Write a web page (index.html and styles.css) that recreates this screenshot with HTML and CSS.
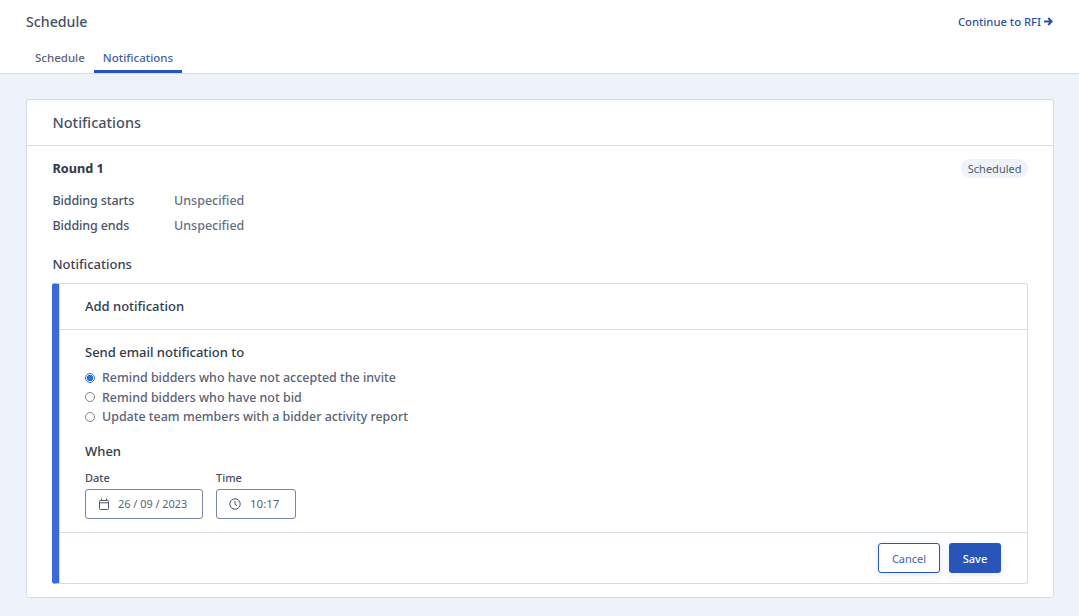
FILE: index.html
```html
<!DOCTYPE html>
<html lang="en">
<head>
<meta charset="utf-8">
<title>Schedule</title>
<link rel="stylesheet" href="styles.css">
</head>
<body>
<header class="topbar">
  <div class="topbar-row">
    <h1 class="page-title">Schedule</h1>
    <a class="continue" href="#">Continue to RFI
      <svg class="continue-arrow" viewBox="0 0 9 9" width="9" height="9" fill="none" stroke="#2f4f9f" stroke-width="2"><path d="M0 4.5H7.5M4.2 1L7.7 4.5L4.2 8"/></svg>
    </a>
  </div>
  <nav class="tabs">
    <a class="tab" href="#">Schedule</a>
    <a class="tab tab-active" href="#">Notifications</a>
  </nav>
</header>
<main class="content">
  <section class="card">
    <h2 class="card-title">Notifications</h2>
    <div class="card-body">
      <div class="round-head">
        <h3 class="round-title">Round 1</h3>
        <span class="badge">Scheduled</span>
      </div>
      <dl class="facts">
        <div class="fact"><dt>Bidding starts</dt><dd>Unspecified</dd></div>
        <div class="fact"><dt>Bidding ends</dt><dd>Unspecified</dd></div>
      </dl>
      <h3 class="section-title">Notifications</h3>
      <div class="panel">
        <h4 class="panel-title">Add notification</h4>
        <div class="panel-body">
          <div class="field-title">Send email notification to</div>
          <ul class="radios">
            <li class="radio-row"><span class="radio radio-on"></span>Remind bidders who have not accepted the invite</li>
            <li class="radio-row"><span class="radio"></span>Remind bidders who have not bid</li>
            <li class="radio-row"><span class="radio"></span>Update team members with a bidder activity report</li>
          </ul>
          <div class="field-title when">When</div>
          <div class="inputs">
            <div class="input-group">
              <span class="input-label">Date</span>
              <div class="input input-date">
                <svg viewBox="0 0 12 12" width="12" height="12" fill="none" stroke="#4a5568" stroke-width="1"><rect x="1.5" y="2.5" width="9" height="9" rx=".8"/><path d="M1.5 4.8H10.5M3.5 .5V2.5M8.5 .5V2.5"/></svg>
                <span>26 / 09 / 2023</span>
              </div>
            </div>
            <div class="input-group">
              <span class="input-label">Time</span>
              <div class="input input-time">
                <svg viewBox="0 0 12 12" width="12" height="12" fill="none" stroke="#4a5568" stroke-width="1"><circle cx="6" cy="6" r="5.2"/><path d="M6 2.8V6.2L8 7.6"/></svg>
                <span>10:17</span>
              </div>
            </div>
          </div>
        </div>
        <div class="panel-footer">
          <button class="btn btn-outline" type="button">Cancel</button>
          <button class="btn btn-primary" type="button">Save</button>
        </div>
      </div>
    </div>
  </section>
</main>
</body>
</html>
```
FILE: styles.css
```css
* { box-sizing: border-box; }
html, body { margin: 0; height: 100%; }
body {
  background: #eef2fb;
  font-family: "Noto Sans", "Open Sans", sans-serif;
  font-size: 13px;
  color: #3a4356;
  overflow: hidden;
}
h1, h2, h3, h4, dl, dd, ul { margin: 0; padding: 0; font-weight: 500; }
a { text-decoration: none; }
.topbar {
  height: 74px;
  background: #fff;
  border-bottom: 1px solid #d5dbe9;
  padding: 0 26px;
}
.topbar-row {
  display: flex;
  justify-content: space-between;
  align-items: center;
  height: 44px;
}
.page-title { font-size: 14.2px; font-weight: 500; line-height: 20px; color: #495162; }
.continue {
  display: flex;
  align-items: center;
  gap: 3px;
  margin-bottom: 1px;
  font-size: 11.25px;
  font-weight: 500;
  color: #2f4f9f;
}
.tabs { display: flex; height: 29px; }
.tab {
  padding: 0 9px;
  font-size: 11.5px;
  font-weight: 500;
  line-height: 28px;
  color: #5a6478;
  height: 29px;
}
.tab-active { color: #4460b0; border-bottom: 3px solid #2a55b8; }
.content { padding: 25px 25px 0 26px; }
.card {
  height: 499px;
  background: #fff;
  border: 1px solid #d5dbe9;
  border-radius: 3px;
}
.card-title {
  height: 46px;
  padding: 0 25.5px;
  border-bottom: 1px solid #d5dbe9;
  font-size: 14.5px;
  font-weight: 500;
  line-height: 45px;
  color: #495162;
}
.card-body { padding: 12px 25px 0 25px; }
.round-head {
  display: flex;
  justify-content: space-between;
  align-items: center;
  height: 20px;
  padding-left: .5px;
}
.round-title { font-size: 12.7px; font-weight: 700; color: #2f3645; }
.badge {
  font-size: 11px;
  line-height: 19px;
  height: 19px;
  padding: 0 6.5px;
  border-radius: 10px;
  background: #eef2fb;
  color: #525b6e;
}
.facts { margin-top: 10px; padding-left: .5px; }
.fact { display: flex; height: 25px; line-height: 25px; font-size: 12.5px; }
.fact dt { width: 121.5px; color: #4a5366; letter-spacing: -.12px; }
.fact dd { color: #667085; }
.section-title { margin-top: 16px; padding-left: .5px; font-size: 13px; line-height: 20px; color: #3a4356; }
.panel {
  margin-top: 9px;
  height: 301px;
  border: 1px solid #d5dbe9;
  border-left: 7px solid #3a6ad8;
  border-radius: 3px;
  box-shadow: inset 1px 0 0 #d5dbe9;
  display: flex;
  flex-direction: column;
}
.panel-title {
  height: 46px;
  padding: 0 26px;
  border-bottom: 1px solid #d5dbe9;
  font-size: 13px;
  line-height: 45px;
  color: #333b4c;
}
.panel-body { flex: 1; padding: 12px 26px 0; }
.field-title { font-size: 13px; font-weight: 500; line-height: 20px; color: #333b4c; }
.radios { list-style: none; margin-top: 6px; }
.radio-row {
  display: flex;
  align-items: center;
  height: 19.5px;
  font-size: 12.45px;
  color: #5a6375;
}
.radio {
  width: 10px;
  height: 10px;
  margin-right: 7px;
  border: 1px solid #858585;
  border-radius: 50%;
  background: #fff;
}
.radio-on {
  border-color: #2f6fe0;
  background: radial-gradient(circle, #2f6fe0 0 3px, #fff 3.5px);
}
.when { margin-top: 14px; }
.inputs { display: flex; gap: 13px; margin-top: 9px; }
.input-group { display: flex; flex-direction: column; }
.input-label { font-size: 11px; font-weight: 500; line-height: 15px; color: #444d60; }
.input {
  margin-top: 4px;
  height: 30px;
  display: flex;
  align-items: center;
  border: 1px solid #7a86a0;
  border-radius: 3px;
  font-size: 10.9px;
  color: #5a6375;
}
.input-date { width: 118px; padding-left: 12px; gap: 8px; }
.input-time { width: 80px; padding-left: 12px; gap: 9px; font-size: 11.5px; }
.panel-footer {
  height: 51px;
  padding: 10px 26px 0 0;
  border-top: 1px solid #d5dbe9;
  display: flex;
  justify-content: flex-end;
  gap: 9px;
}
.btn {
  height: 30px;
  border-radius: 3px;
  font-family: inherit;
  font-size: 11px;
  box-shadow: 0 2px 6px rgba(42, 85, 184, .15);
}
.btn-outline { width: 62px; background: #fff; border: 1px solid #2a55b8; color: #4460b0; font-weight: 400; }
.btn-primary { width: 52px; background: #2a55b8; border: 0; color: #fff; font-weight: 500; }
```
